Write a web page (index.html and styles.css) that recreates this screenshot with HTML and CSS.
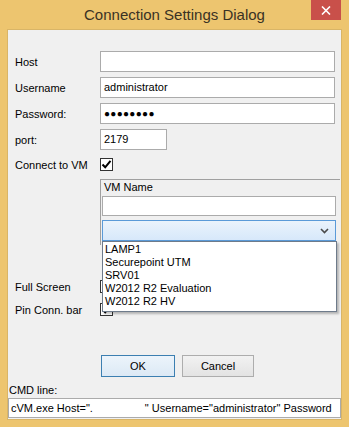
FILE: index.html
```html
<!DOCTYPE html>
<html lang="en">
<head>
    <meta charset="UTF-8">
    <title>Connection Settings Dialog</title>
    <link rel="stylesheet" href="styles.css">
</head>
<body>

<div class="window">
    <div class="titlebar">
        <span class="title">Connection Settings Dialog</span>
        <span class="close">
            <svg width="10" height="9" viewBox="0 0 10 9"><path d="M1 0.5 L9 8.5 M9 0.5 L1 8.5" stroke="#fff" stroke-width="1.6"/></svg>
        </span>
    </div>

    <div class="client">
        <div class="form">
            <div class="row">
                <label>Host</label>
                <div class="textfield"></div>
            </div>
            <div class="row">
                <label>Username</label>
                <div class="textfield">administrator</div>
            </div>
            <div class="row">
                <label>Password:</label>
                <div class="textfield password">&#9679;&#9679;&#9679;&#9679;&#9679;&#9679;&#9679;&#9679;</div>
            </div>
            <div class="row">
                <label>port:</label>
                <div class="textfield short">2179</div>
            </div>
            <div class="row check-row first-check">
                <label>Connect to VM</label>
                <span class="checkbox">
                    <svg width="11" height="11" viewBox="0 0 11 11"><path d="M1.5 5.5 L4.2 8.3 L9.5 1.8" stroke="#000" stroke-width="2" fill="none"/></svg>
                </span>
            </div>

            <div class="vmgroup">
                <div class="vmlabel">VM Name</div>
                <div class="textfield vmname"></div>
                <div class="combo">
                    <svg class="chevron" width="9" height="6" viewBox="0 0 9 6"><path d="M1 1 L4.5 4.5 L8 1" stroke="#4a4a4a" stroke-width="1.6" fill="none"/></svg>
                    <ul class="droplist">
                        <li>LAMP1</li>
                        <li>Securepoint UTM</li>
                        <li>SRV01</li>
                        <li>W2012 R2 Evaluation</li>
                        <li>W2012 R2 HV</li>
                    </ul>
                </div>
            </div>

            <div class="row check-row fullscreen">
                <label>Full Screen</label>
                <span class="checkbox"></span>
            </div>
            <div class="row check-row pin">
                <label>Pin Conn. bar</label>
                <span class="checkbox">
                    <svg width="11" height="11" viewBox="0 0 11 11"><path d="M1.5 5.5 L4.2 8.3 L9.5 1.8" stroke="#000" stroke-width="2" fill="none"/></svg>
                </span>
            </div>

            <div class="buttons">
                <div class="btn btn-default">OK</div>
                <div class="btn">Cancel</div>
            </div>
        </div>

        <div class="cmdlabel">CMD line:</div>
        <div class="cmdline">cVM.exe Host=".<span class="blank"></span>" Username="administrator" Password</div>
    </div>
</div>

</body>
</html>
```

FILE: styles.css
```css
body{
    margin: 0;
    font-family: "Liberation Sans", Arial, sans-serif;
    font-size: 11px;
    color: #000;
}
.window{
    width: 349px;
    height: 427px;
    box-sizing: border-box;
    padding: 0 8px 8px 8px;
    background: #EDC56F;
}
.titlebar{
    position: relative;
    height: 30px;
    text-align: center;
}
.titlebar .title{
    display: inline-block;
    padding-top: 6px;
    font-size: 15px;
    color: #3a3224;
}
.close{
    position: absolute;
    top: 0;
    right: 0;
    width: 30px;
    height: 20px;
    background: #C9504A;
    display: flex;
    align-items: center;
    justify-content: center;
}
.client{
    height: 389px;
    background: #F0F0F0;
    box-shadow: 0 0 0 1px #D9B567;
    padding-top: 21px;
    box-sizing: border-box;
}
.form{
    padding-left: 7px;
}
.row{
    display: flex;
    align-items: center;
    height: 21px;
    margin-bottom: 5px;
}
.row label{
    width: 85px;
    flex: none;
}
.textfield{
    box-sizing: border-box;
    width: 235px;
    height: 21px;
    padding: 0 3px;
    line-height: 19px;
    background: #fff;
    border: 1px solid #ABABAB;
    white-space: nowrap;
}
.textfield.short{
    width: 67px;
}
.password{
    font-size: 10px;
    letter-spacing: 0.3px;
}
.check-row{
    height: 13px;
    margin-bottom: 0;
}
.first-check{
    margin-top: 8px;
}
.checkbox{
    box-sizing: border-box;
    width: 13px;
    height: 13px;
    background: #fff;
    border: 1px solid #333;
    display: flex;
    align-items: center;
    justify-content: center;
}
.vmgroup{
    margin: 8px 0 0 85px;
    width: 240px;
    box-sizing: border-box;
    padding: 0 0 4px 1px;
    border-top: 1px solid #A0A0A0;
    border-left: 1px solid #A0A0A0;
}
.vmlabel{
    height: 16px;
    line-height: 15px;
    padding-left: 2px;
}
.vmname{
    width: 234px;
    height: 20px;
}
.combo{
    position: relative;
    box-sizing: border-box;
    width: 234px;
    height: 21px;
    margin-top: 4px;
    border: 1px solid #5A9AD8;
    background: linear-gradient(#EAF3FC, #D7E8FA);
}
.chevron{
    position: absolute;
    right: 6px;
    top: 7px;
}
.droplist{
    position: absolute;
    top: 20px;
    left: -1px;
    width: 235px;
    height: 71px;
    box-sizing: border-box;
    margin: 0;
    padding: 1px 0 0 2px;
    list-style: none;
    background: #fff;
    border: 1px solid #6E7B8B;
    box-shadow: 2px 2px 2px rgba(0,0,0,0.25);
    z-index: 2;
}
.droplist li{
    height: 13px;
    line-height: 13px;
    font-size: 11px;
}
.fullscreen{
    margin-top: 35px;
}
.pin{
    margin-top: 10px;
}
.buttons{
    display: flex;
    margin: 39px 0 0 86px;
}
.btn{
    box-sizing: border-box;
    width: 72px;
    height: 22px;
    line-height: 20px;
    text-align: center;
    border: 1px solid #ADADAD;
    background: linear-gradient(#F2F2F2, #E3E3E3);
}
.btn-default{
    width: 74px;
    margin-right: 7px;
    border-color: #3C7FB1;
    background: linear-gradient(#ECF4FB, #DCE9F5);
}
.cmdlabel{
    margin-top: 7px;
    padding-left: 1px;
    height: 13px;
    line-height: 13px;
}
.cmdline{
    box-sizing: border-box;
    margin-top: 1px;
    width: 333px;
    height: 20px;
    padding: 0 2px;
    line-height: 18px;
    background: #fff;
    border: 1px solid #ABABAB;
    white-space: nowrap;
    overflow: hidden;
}
.blank{
    display: inline-block;
    width: 52px;
}
```
